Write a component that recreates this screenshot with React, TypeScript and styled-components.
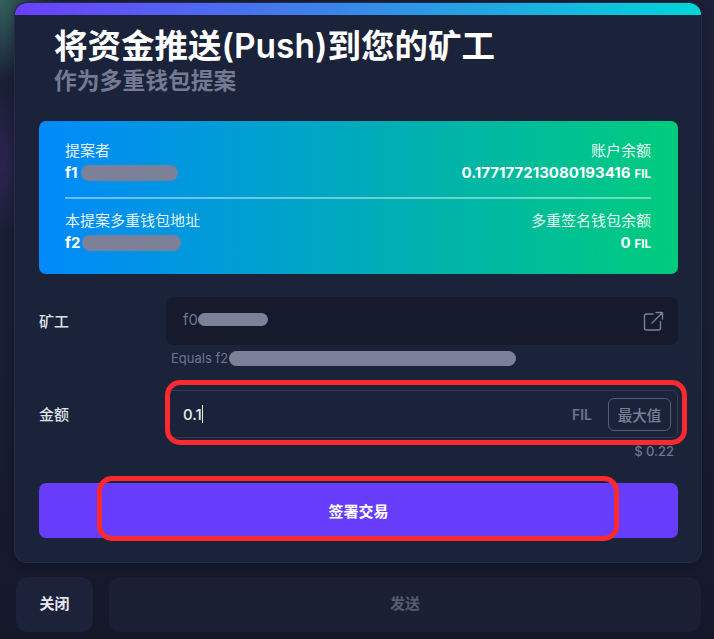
import React from 'react';
import styled, { createGlobalStyle } from 'styled-components';

const GlobalStyle = createGlobalStyle`
  html, body {
    margin: 0;
    padding: 0;
    height: 100%;
    background: #141829;
  }
  * { box-sizing: border-box; }
`;

const Page = styled.div`
  width: 714px;
  height: 639px;
  overflow: hidden;
  padding: 3px 13px 0 15px;
  display: flex;
  flex-direction: column;
  font-family: 'Inter', 'Noto Sans CJK SC', sans-serif;
  color: #fff;
  background:
    radial-gradient(ellipse 60px 80px at 0 0, #33625d 0%, rgba(47, 90, 88, 0) 100%),
    radial-gradient(ellipse 40px 70px at 0 165px, #2c2450 0%, rgba(44, 36, 80, 0) 100%),
    linear-gradient(180deg, #1c2038 0%, #1a1e33 50%, #141829 100%);
`;

const Card = styled.div`
  width: 686px;
  height: 559px;
  background: #1b233a;
  border-radius: 12px;
  overflow: hidden;
  display: flex;
  flex-direction: column;
  box-shadow: 0 0 0 1px #242b45, 0 0 10px rgba(10, 12, 24, 0.4);
`;

const TopBar = styled.div`
  height: 12px;
  flex: none;
  background: linear-gradient(90deg, #6c3ffb 0%, #00d6d8 100%);
`;

const Body = styled.div`
  padding: 9px 23px 0 24px;
  display: flex;
  flex-direction: column;
`;

const Heading = styled.div`
  padding-left: 15px;
  height: 97px;
`;

const Title = styled.div`
  font-size: 33.5px;
  line-height: 44px;
  font-weight: 600;
`;

const Subtitle = styled.div`
  font-size: 22.8px;
  line-height: 26px;
  font-weight: 600;
  color: #747a93;
`;

const Banner = styled.div`
  height: 153px;
  border-radius: 7px;
  padding: 18px 27px 0 26px;
  background: linear-gradient(90deg, #0089fb 0%, #00cc7c 100%);
  display: flex;
  flex-direction: column;
`;

const BannerRow = styled.div`
  display: flex;
  justify-content: space-between;
`;

const BannerDivider = styled.div`
  height: 2px;
  margin: 12px 0 10px;
  background: rgba(255, 255, 255, 0.42);
`;

const InfoColumn = styled.div<{ $right?: boolean }>`
  display: flex;
  flex-direction: column;
  align-items: ${p => (p.$right ? 'flex-end' : 'flex-start')};
`;

const InfoLabel = styled.div`
  font-size: 15px;
  line-height: 23px;
  color: rgba(255, 255, 255, 0.92);
`;

const InfoValue = styled.div`
  font-size: 15px;
  line-height: 22px;
  font-weight: 700;
  display: flex;
  align-items: baseline;
  white-space: nowrap;
`;

const Unit = styled.span`
  font-size: 11.500px;
  font-weight: 700;
  margin-left: 4px;
`;

const Redacted = styled.span<{ $width: number; $height: number; $offset: number }>`
  display: inline-block;
  width: ${p => p.$width}px;
  height: ${p => p.$height}px;
  margin-left: ${p => p.$offset}px;
  border-radius: ${p => p.$height / 2}px;
  background: #7c8199;
  align-self: center;
`;

const FormRow = styled.div`
  display: flex;
  margin-top: 23px;
`;

const FieldLabel = styled.div`
  width: 127px;
  flex: none;
  font-size: 15px;
  font-weight: 500;
  line-height: 50px;
  color: #dfe1e8;
`;

const FieldColumn = styled.div`
  flex: 1;
  display: flex;
  flex-direction: column;
`;

const MinerInput = styled.div`
  height: 48px;
  border-radius: 8px;
  background: #151a2d;
  padding: 0 16px 0 17px;
  display: flex;
  align-items: center;
  justify-content: space-between;
  font-size: 15px;
  color: #6f758c;
`;

const MinerValue = styled.div`
  display: flex;
  align-items: center;
  padding-bottom: 4px;
`;

const OpenLink = styled.svg`
  width: 22px;
  height: 22px;
  margin-right: -2px;
  fill: none;
  stroke: #7a8096;
  stroke-width: 1.4;
  stroke-linecap: round;
  stroke-linejoin: round;
`;

const HintRow = styled.div`
  display: flex;
  align-items: center;
  height: 20px;
  margin-top: 3px;
  padding-left: 5px;
  font-size: 13px;
  color: #6f758c;
  white-space: nowrap;
`;

const AmountRow = styled(FormRow)`
  margin-top: 22px;
  position: relative;
`;

const AmountInput = styled.div`
  height: 48px;
  border-radius: 6px;
  border: 1px solid #333a50;
  padding: 0 6px 0 16px;
  display: flex;
  align-items: center;
  font-size: 15px;
  font-weight: 500;
  color: #e8eaf0;
`;

const Caret = styled.span`
  width: 1px;
  height: 18px;
  background: #e8eaf0;
`;

const Spacer = styled.div`
  flex: 1;
`;

const InputUnit = styled.span`
  font-size: 14px;
  font-weight: 600;
  color: #6f758c;
  margin-right: 16px;
`;

const MaxButton = styled.button`
  width: 63px;
  height: 33px;
  padding: 0;
  background: transparent;
  border: 1px solid #555c74;
  border-radius: 6px;
  color: #7a8096;
  font-family: inherit;
  font-size: 14.500px;
  font-weight: 500;
`;

const UsdValue = styled.div`
  text-align: right;
  font-size: 13px;
  font-weight: 500;
  line-height: 16px;
  color: #6f758c;
  padding-right: 4px;
  margin-top: 5px;
`;

const SignWrap = styled.div`
  position: relative;
  margin-top: 24px;
`;

const SignButton = styled.button`
  display: block;
  width: 100%;
  height: 55px;
  padding: 0 0 1px;
  border: none;
  border-radius: 7px;
  background: #673dfb;
  color: #fff;
  font-family: inherit;
  font-size: 15px;
  font-weight: 700;
`;

const Highlight = styled.div<{ $left: number; $top: number; $width: number; $height: number }>`
  position: absolute;
  left: ${p => p.$left}px;
  top: ${p => p.$top}px;
  width: ${p => p.$width}px;
  height: ${p => p.$height}px;
  border: 5px solid #fa2a30;
  border-radius: 15px;
  pointer-events: none;
`;

const Footer = styled.div`
  display: flex;
  gap: 16px;
  margin-top: 15px;
  padding-left: 1px;
`;

const CloseButton = styled.button`
  width: 77px;
  height: 55px;
  padding: 0 0 4px;
  border: none;
  border-radius: 12px;
  background: #1b2239;
  color: #e6e8ee;
  font-family: inherit;
  font-size: 15px;
  font-weight: 600;
`;

const SendButton = styled.button`
  flex: 1;
  height: 55px;
  padding: 0 0 4px;
  border: none;
  border-radius: 12px;
  background: #1a1f33;
  color: #575c6e;
  font-family: inherit;
  font-size: 15px;
  font-weight: 600;
`;

const App: React.FC = () => {
  return (
    <>
      <GlobalStyle />
      <Page>
        <Card>
          <TopBar />
          <Body>
            <Heading>
              <Title>将资金推送(Push)到您的矿工</Title>
              <Subtitle>作为多重钱包提案</Subtitle>
            </Heading>

            <Banner>
              <BannerRow>
                <InfoColumn>
                  <InfoLabel>提案者</InfoLabel>
                  <InfoValue>
                    f1
                    <Redacted $width={97} $height={16} $offset={4} />
                  </InfoValue>
                </InfoColumn>
                <InfoColumn $right>
                  <InfoLabel>账户余额</InfoLabel>
                  <InfoValue>
                    0.177177213080193416<Unit>FIL</Unit>
                  </InfoValue>
                </InfoColumn>
              </BannerRow>
              <BannerDivider />
              <BannerRow>
                <InfoColumn>
                  <InfoLabel>本提案多重钱包地址</InfoLabel>
                  <InfoValue>
                    f2
                    <Redacted $width={99} $height={16} $offset={2} />
                  </InfoValue>
                </InfoColumn>
                <InfoColumn $right>
                  <InfoLabel>多重签名钱包余额</InfoLabel>
                  <InfoValue>
                    0<Unit>FIL</Unit>
                  </InfoValue>
                </InfoColumn>
              </BannerRow>
            </Banner>

            <FormRow>
              <FieldLabel>矿工</FieldLabel>
              <FieldColumn>
                <MinerInput>
                  <MinerValue>
                    f0
                    <Redacted $width={70} $height={13} $offset={0} />
                  </MinerValue>
                  <OpenLink viewBox="0 0 22 22">
                    <path d="M11 4H4.500A2 2 0 0 0 2.500 6v12a2 2 0 0 0 2 2h12a2 2 0 0 0 2-2v-6.500" />
                    <path d="M10 13 20.500 2.500M14 2.500h6.500V9" />
                  </OpenLink>
                </MinerInput>
                <HintRow>
                  Equals f2
                  <Redacted $width={287} $height={15} $offset={1} />
                </HintRow>
              </FieldColumn>
            </FormRow>

            <AmountRow>
              <FieldLabel>金额</FieldLabel>
              <FieldColumn>
                <AmountInput>
                  0.1
                  <Caret />
                  <Spacer />
                  <InputUnit>FIL</InputUnit>
                  <MaxButton>最大值</MaxButton>
                </AmountInput>
                <UsdValue>$ 0.22</UsdValue>
              </FieldColumn>
              <Highlight $left={126} $top={-10} $width={522} $height={65} />
            </AmountRow>

            <SignWrap>
              <SignButton>签署交易</SignButton>
              <Highlight $left={58} $top={-7} $width={522} $height={65} />
            </SignWrap>
          </Body>
        </Card>

        <Footer>
          <CloseButton>关闭</CloseButton>
          <SendButton>发送</SendButton>
        </Footer>
      </Page>
    </>
  );
};

export default App;
